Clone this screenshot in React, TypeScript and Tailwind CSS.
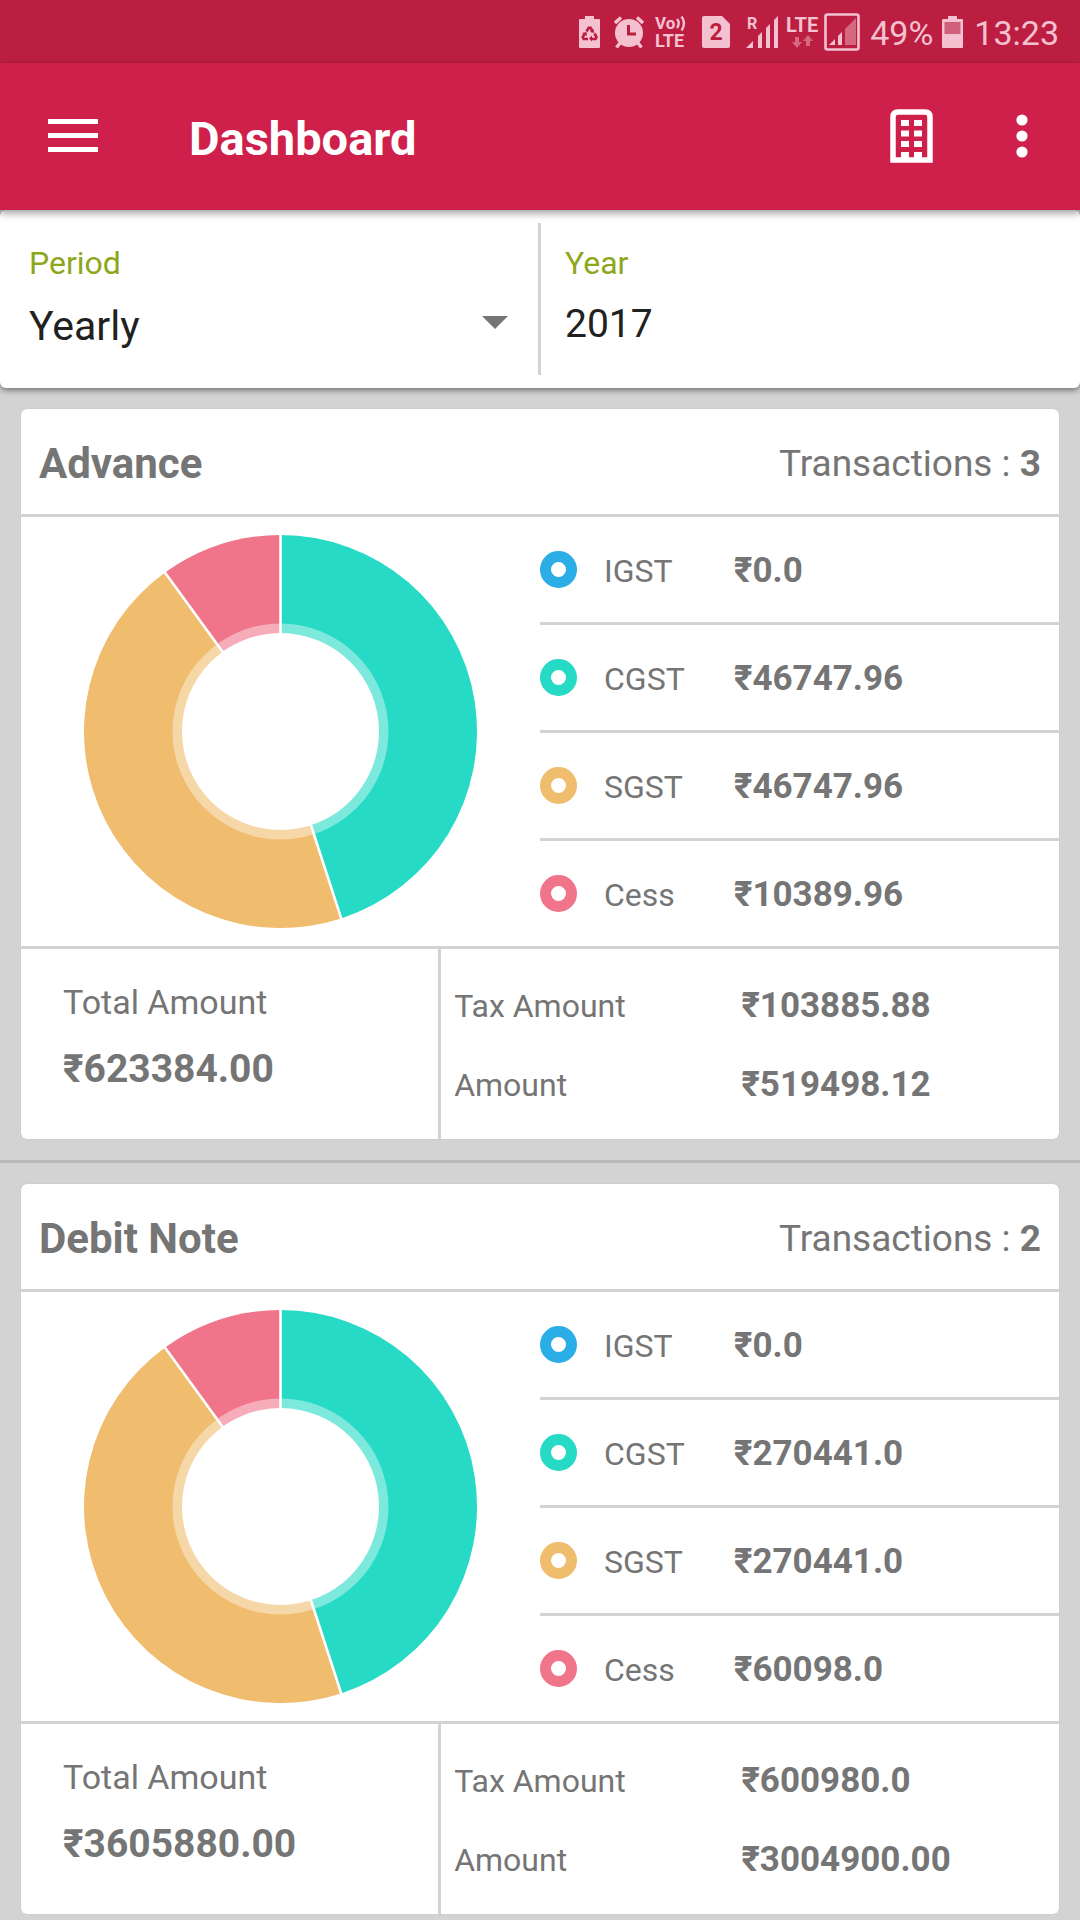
import { useState } from 'react'

interface TaxEntry {
  name: string
  amount: string
}

interface Summary {
  title: string
  transactions: number
  taxes: TaxEntry[]
  total: string
  taxAmount: string
  amount: string
}

const summaries: Summary[] = [
  {
    title: 'Advance',
    transactions: 3,
    taxes: [
      { name: 'IGST', amount: '0.0' },
      { name: 'CGST', amount: '46747.96' },
      { name: 'SGST', amount: '46747.96' },
      { name: 'Cess', amount: '10389.96' },
    ],
    total: '623384.00',
    taxAmount: '103885.88',
    amount: '519498.12',
  },
  {
    title: 'Debit Note',
    transactions: 2,
    taxes: [
      { name: 'IGST', amount: '0.0' },
      { name: 'CGST', amount: '270441.0' },
      { name: 'SGST', amount: '270441.0' },
      { name: 'Cess', amount: '60098.0' },
    ],
    total: '3605880.00',
    taxAmount: '600980.0',
    amount: '3004900.00',
  },
]

const taxColors: Record<string, string> = {
  IGST: '#2bade6',
  CGST: '#26dac5',
  SGST: '#f0bc6e',
  Cess: '#f0758a',
}

function StatusBar() {
  return (
    <div className="flex h-[63px] items-center justify-end bg-[#bc1e41] pr-[21px] text-[#f3c1cf]">
      {/* Power saving battery */}
      <svg width="21" height="32" viewBox="0 0 21 32" fill="currentColor" className="mr-[14px]">
        <path d="M6 0h9v3h5a1 1 0 0 1 1 1v27a1 1 0 0 1-1 1H1a1 1 0 0 1-1-1V4a1 1 0 0 1 1-1h5z" />
        <g fill="none" stroke="#bc1e41" strokeWidth="2.6">
          <path d="M7.5 15.5l2.2-3.6h1.8l2.2 3.6" />
          <path d="M15.5 17.5l2 3.6-1 1.9h-4.5" />
          <path d="M9 23H4.7l-1-1.9 2.2-3.6" />
        </g>
        <path d="M14 12.5l1.5 4.5-4.5-1zM13 19.5v6l-3-3zM3 17l4.5-1 .5 4z" fill="#bc1e41" />
      </svg>
      {/* Alarm */}
      <svg width="30" height="32" viewBox="0 0 30 32" className="mr-[11px]">
        <circle cx="15" cy="17" r="14" fill="currentColor" />
        <path d="M1 7l6-5.5M29 7l-6-5.5M6 27l-3.5 4.5M24 27l3.5 4.5" fill="none" stroke="currentColor" strokeWidth="3.4" />
        <path d="M14.5 9v9H22" fill="none" stroke="#bc1e41" strokeWidth="3" />
      </svg>
      {/* VoLTE */}
      <svg width="34" height="40" viewBox="0 0 34 40" fill="currentColor" className="mr-[13px] font-['Roboto',sans-serif] font-bold">
        <text x="0" y="17" fontSize="17">Vo</text>
        <path d="M22 7q3.5 4 0 9M26.5 4.5q5 6.5 0 14" fill="none" stroke="currentColor" strokeWidth="2.4" />
        <text x="0" y="35" fontSize="18">LTE</text>
      </svg>
      {/* SIM 2 */}
      <svg width="28" height="32" viewBox="0 0 28 32" className="mr-[16px] font-['Roboto',sans-serif] font-bold">
        <path d="M2 0h18l8 8v22a2 2 0 0 1-2 2H2a2 2 0 0 1-2-2V2a2 2 0 0 1 2-2z" fill="currentColor" />
        <text x="14" y="24" fontSize="23" textAnchor="middle" fill="#bc1e41">2</text>
      </svg>
      {/* Roaming signal */}
      <svg width="33" height="38" viewBox="0 0 33 38" fill="currentColor" className="mr-[7px] font-['Roboto',sans-serif] font-bold">
        <text x="1" y="16" fontSize="16">R</text>
        <path d="M0 35l7-7v7zM12 23l4-4v16h-4zM20 15l4-4v24h-4zM28 7l4-4v32h-4z" />
      </svg>
      {/* LTE data */}
      <svg width="37" height="40" viewBox="0 0 37 40" fill="currentColor" className="mr-px font-['Roboto',sans-serif] font-bold">
        <text x="0" y="20" fontSize="20">LTE</text>
        <g opacity="0.45">
          <path d="M9 25h4v5h3l-5 6-5-6h3z" />
          <path d="M20 34h4v-5h3l-5-6-5 6h3z" />
        </g>
      </svg>
      {/* Boxed signal */}
      <svg width="36" height="38" viewBox="0 0 36 38" className="mr-[10px]">
        <rect x="1.5" y="1.5" width="33" height="35" rx="2" fill="none" stroke="currentColor" strokeWidth="2.6" />
        <path d="M5 32l6-6v6zM14 23l4-4v13h-4z" fill="currentColor" />
        <path d="M21 16L32 5v27H21z" fill="currentColor" opacity="0.45" />
      </svg>
      <span className="mr-[9px] pt-0.5 text-[34px] leading-[40px]">49%</span>
      {/* Battery */}
      <svg width="21" height="32" viewBox="0 0 21 32" fill="currentColor" className="mr-[11px]">
        <path d="M6 0h9v3h5a1 1 0 0 1 1 1v27a1 1 0 0 1-1 1H1a1 1 0 0 1-1-1V4a1 1 0 0 1 1-1h5z" />
        <rect x="2.5" y="6" width="16" height="12" fill="#d0607c" />
      </svg>
      <span className="pt-0.5 text-[34px] leading-[40px]">13:23</span>
    </div>
  )
}

function AppBar() {
  return (
    <header className="relative z-10 flex h-[147px] items-center bg-[#ce204b] pr-7 pb-0.5 pl-12 text-white shadow-[0_3px_8px_rgba(0,0,0,0.4)]">
      <button aria-label="Menu" className="mr-[91px]">
        <svg width="50" height="36" viewBox="0 0 50 36" fill="currentColor" className="block">
          <path d="M0 1h50v5H0zM0 15h50v5H0zM0 29h50v5H0z" />
        </svg>
      </button>
      <h1 className="flex-1 pt-1.5 text-[47px] leading-[54px] font-bold">Dashboard</h1>
      <button aria-label="Company" className="mr-[59px]">
        <svg width="43" height="54" viewBox="0 0 43 54" className="block">
          <path d="M3 51V8q0-5 5-5h27q5 0 5 5v43z" fill="none" stroke="currentColor" strokeWidth="5.5" />
          <path
            d="M11 11h8v6h-8zM24 11h8v6h-8zM11 21.5h8v6h-8zM24 21.5h8v6h-8zM11 32h8v6h-8zM24 32h8v6h-8zM11 43h8v8h-8zM24 43h8v8h-8z"
            fill="currentColor"
          />
        </svg>
      </button>
      <button aria-label="More options" className="px-6">
        <svg width="12" height="44" viewBox="0 0 12 44" fill="currentColor" className="block">
          <circle cx="6" cy="6" r="5.6" />
          <circle cx="6" cy="22" r="5.6" />
          <circle cx="6" cy="38" r="5.6" />
        </svg>
      </button>
    </header>
  )
}

function Filters() {
  const [period, setPeriod] = useState('Yearly')
  const [year, setYear] = useState('2017')

  return (
    <section className="flex h-[178px] rounded-md bg-white py-[13px] shadow-[0_2px_6px_rgba(0,0,0,0.5)]">
      <div className="flex w-1/2 flex-col pt-5 pr-8 pl-[29px]">
        <label htmlFor="period" className="text-[32px] leading-[40px] text-[#8ca81a]">
          Period
        </label>
        <div className="relative mt-[19px]">
          <select
            id="period"
            value={period}
            onChange={(e) => setPeriod(e.target.value)}
            className="block h-[48px] w-full appearance-none bg-transparent text-[41px] leading-[48px] text-[#212121] outline-none"
          >
            <option>Yearly</option>
            <option>Quarterly</option>
            <option>Monthly</option>
          </select>
          <svg
            width="26"
            height="13"
            viewBox="0 0 26 13"
            className="pointer-events-none absolute top-3.5 right-0 fill-[#757575]"
          >
            <path d="M0 0h26L13 13z" />
          </svg>
        </div>
      </div>
      <div className="-ml-0.5 flex min-w-0 flex-1 flex-col border-l-3 border-[#d3d3d3] pt-5 pl-[24px]">
        <label htmlFor="year" className="text-[32px] leading-[40px] text-[#8ca81a]">
          Year
        </label>
        <input
          id="year"
          value={year}
          onChange={(e) => setYear(e.target.value)}
          className="mt-[17px] block h-[48px] w-full bg-transparent text-[39px] leading-[48px] text-[#212121] outline-none"
        />
      </div>
    </section>
  )
}

const CENTER = 196.5
const OUTER = 196.5
const HOLE = 98.5
const HALO = 108

function point(radius: number, turn: number) {
  const angle = turn * 2 * Math.PI
  return `${CENTER + radius * Math.sin(angle)} ${CENTER - radius * Math.cos(angle)}`
}

function DonutChart({ taxes }: { taxes: TaxEntry[] }) {
  const total = taxes.reduce((sum, tax) => sum + Number(tax.amount), 0)
  let turn = 0
  const slices = taxes
    .filter((tax) => Number(tax.amount) > 0)
    .map((tax) => {
      const start = turn
      turn += Number(tax.amount) / total
      return { name: tax.name, start, end: turn }
    })

  return (
    <svg viewBox="0 0 393 393" className="block w-[393px] max-w-full">
      {slices.map(({ name, start, end }) => (
        <path
          key={name}
          d={`M${CENTER} ${CENTER}L${point(OUTER, start)}A${OUTER} ${OUTER} 0 ${end - start > 0.5 ? 1 : 0} 1 ${point(OUTER, end)}Z`}
          fill={taxColors[name]}
        />
      ))}
      <circle cx={CENTER} cy={CENTER} r={HALO} fill="#ffffff" opacity="0.4" />
      {slices.map(({ name, start }) => (
        <path key={name} d={`M${CENTER} ${CENTER}L${point(OUTER + 1, start)}`} stroke="#ffffff" strokeWidth="2.6" />
      ))}
      <circle cx={CENTER} cy={CENTER} r={HOLE} fill="#ffffff" />
    </svg>
  )
}

function SummaryCard({ summary }: { summary: Summary }) {
  return (
    <article className="rounded-md bg-white text-[#757575] shadow-[0_0_1px_rgba(0,0,0,0.2)]">
      <div className="flex h-[108px] items-center justify-between border-b-3 border-[#d3d3d3] px-[18px] pt-1">
        <h2 className="text-[42px] leading-[50px] font-bold">{summary.title}</h2>
        <p className="text-[37px] leading-[50px]">
          Transactions : <span className="font-bold">{summary.transactions}</span>
        </p>
      </div>

      <div className="flex border-b-3 border-[#d3d3d3]">
        <div className="flex w-1/2 items-center justify-center">
          <DonutChart taxes={summary.taxes} />
        </div>
        <dl className="w-1/2 divide-y-3 divide-[#d3d3d3]">
          {summary.taxes.map((tax) => (
            <div key={tax.name} className="flex h-[108px] items-center last:h-[105px]">
              <svg width="37" height="37" viewBox="0 0 37 37" className="mr-[27px] shrink-0">
                <circle cx="18.5" cy="18.5" r="13" fill="none" stroke={taxColors[tax.name]} strokeWidth="11" />
              </svg>
              <dt className="w-[130px] pt-0.5 text-[32px] leading-[40px]">{tax.name}</dt>
              <dd className="pt-0.5 text-[35px] leading-[40px] font-bold">₹{tax.amount}</dd>
            </div>
          ))}
        </dl>
      </div>

      <div className="grid h-[190px] grid-cols-[17fr_25fr]">
        <div className="border-r-3 border-[#d3d3d3] pt-[33px] pl-[42px]">
          <p className="text-[34px] leading-[40px]">Total Amount</p>
          <p className="mt-[27px] text-[39px] leading-[40px] font-bold">₹{summary.total}</p>
        </div>
        <dl className="grid grid-cols-[19fr_21fr] content-start gap-y-[39px] pt-[37px] pl-[13px]">
          <dt className="text-[32px] leading-[40px]">Tax Amount</dt>
          <dd className="text-[35px] leading-[40px] font-bold">₹{summary.taxAmount}</dd>
          <dt className="text-[32px] leading-[40px]">Amount</dt>
          <dd className="text-[35px] leading-[40px] font-bold">₹{summary.amount}</dd>
        </dl>
      </div>
    </article>
  )
}

export default function App() {
  return (
    <div className="min-h-screen bg-[#d3d3d3] font-['Roboto',sans-serif]">
      <StatusBar />
      <AppBar />
      <Filters />
      <main className="divide-y-3 divide-[#b8b8b8]">
        {summaries.map((summary) => (
          <div key={summary.title} className="px-[21px] py-[21px] last:pb-1.5">
            <SummaryCard summary={summary} />
          </div>
        ))}
      </main>
    </div>
  )
}
